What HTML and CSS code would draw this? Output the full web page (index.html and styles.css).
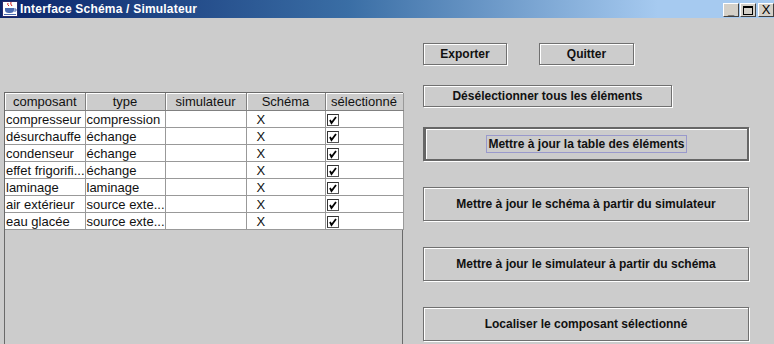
FILE: index.html
```html
<!DOCTYPE html>
<html lang="fr">
<head>
  <meta charset="UTF-8">
  <title>Interface Schéma / Simulateur</title>
  <link rel="stylesheet" href="styles.css">
</head>
<body>
  <div class="titlebar">
    <svg class="app-icon" width="16" height="16" viewBox="0 0 16 16">
      <rect x="0.5" y="0.5" width="15" height="15" fill="#fff" stroke="#2a2a6a"/>
      <path d="M6 2 Q5 4 7 5 M9 1 Q8 3 10 5" stroke="#d02020" fill="none"/>
      <path d="M3 7 H12 V9 Q12 12 8 12 H7 Q3 12 3 9 Z" fill="#4a6ab0"/>
      <path d="M12 8 H14 V10 H12" stroke="#4a6ab0" fill="none"/>
      <rect x="2" y="13" width="12" height="1" fill="#4a6ab0"/>
    </svg>
    <span class="title">Interface Schéma / Simulateur</span>
    <div class="controls">
      <span class="ctl">_</span>
      <span class="ctl"><i class="maxbox"></i></span>
      <span class="ctl close">X</span>
    </div>
  </div>

  <div class="content">
    <div class="left">
      <div class="scrollpane">
        <table class="grid">
          <colgroup>
            <col style="width:80px"><col style="width:80px"><col style="width:81px"><col style="width:79px"><col style="width:78px">
          </colgroup>
          <thead>
            <tr><th>composant</th><th>type</th><th>simulateur</th><th>Schéma</th><th class="last">sélectionné</th></tr>
          </thead>
          <tbody id="rows"></tbody>
        </table>
      </div>
    </div>

    <div class="right">
      <div class="toprow">
        <button class="btn small export">Exporter</button>
        <button class="btn small quit">Quitter</button>
      </div>
      <button class="btn small deselect">Désélectionner tous les éléments</button>
      <button class="btn big focused"><span class="focus">Mettre à jour la table des éléments</span></button>
      <button class="btn big">Mettre à jour le schéma à partir du simulateur</button>
      <button class="btn big">Mettre à jour le simulateur à partir du schéma</button>
      <button class="btn big">Localiser le composant sélectionné</button>
    </div>
  </div>

  <script>
    var data = [
      ['compresseur', 'compression'],
      ['désurchauffe', 'échange'],
      ['condenseur', 'échange'],
      ['effet frigorifi...', 'échange'],
      ['laminage', 'laminage'],
      ['air extérieur', 'source exte...'],
      ['eau glacée', 'source exte...']
    ];
    var check = '<svg class="chk" width="12" height="12" viewBox="0 0 12 12">' +
      '<rect x="0.5" y="0.5" width="11" height="11" fill="#fff" stroke="#555"/>' +
      '<path d="M0.5 11.5 V0.5 H11.5" stroke="#333" fill="none"/>' +
      '<path d="M3 6 L4.5 9 L9 3" stroke="#000" stroke-width="1.8" fill="none"/></svg>';
    var body = document.getElementById('rows');
    data.forEach(function (r) {
      var tr = document.createElement('tr');
      tr.innerHTML = '<td>' + r[0] + '</td><td>' + r[1] + '</td><td></td>' +
        '<td class="x">X</td><td class="last">' + check + '</td>';
      body.appendChild(tr);
    });
  </script>
</body>
</html>
```

FILE: styles.css
```css
html, body {
  margin: 0;
  padding: 0;
  width: 774px;
  height: 344px;
  overflow: hidden;
  background-color: #cccccc;
  font-family: "Liberation Sans", Arial, sans-serif;
}
.titlebar {
  height: 18px;
  display: flex;
  align-items: center;
  background: linear-gradient(to right, #0a246a 0%, #3a6ea5 45%, #a6caf0 85%, #a6caf0 100%);
  color: white;
  padding-left: 2px;
}
.app-icon {
  flex: none;
}
.title {
  font-weight: bold;
  font-size: 12px;
  margin-left: 2px;
  letter-spacing: 0.2px;
}
.controls {
  margin-left: auto;
  display: flex;
  gap: 0;
  margin-top: 1px;
}
.ctl {
  width: 14px;
  height: 12px;
  background: #d4d0c8;
  border: 1px solid;
  border-color: #ffffff #404040 #404040 #ffffff;
  color: black;
  font-size: 11px;
  font-weight: bold;
  line-height: 12px;
  text-align: center;
  margin-left: 1px;
}
.ctl.close {
  margin-left: 2px;
  font-weight: normal;
  font-size: 13px;
}
.maxbox {
  display: inline-block;
  width: 8px;
  height: 6px;
  border: 1px solid black;
  border-top-width: 2px;
  margin-top: 2px;
}
.content {
  display: flex;
  height: 326px;
}
.left {
  padding: 74px 0 0 4px;
  width: 399px;
}
.scrollpane {
  border: 1px solid #6a6a6a;
  border-bottom: none;
  height: 252px;
}
.grid {
  border-collapse: collapse;
  table-layout: fixed;
  width: 398px;
  font-size: 13px;
}
.grid th {
  height: 17px;
  padding: 0;
  font-weight: normal;
  background: #cccccc;
  border: 1px solid #808080;
  border-top: none;
  box-shadow: inset 1px 1px #ffffff;
  text-align: center;
  color: #111;
}
.grid th:first-child {
  border-left: none;
}
.grid td {
  height: 16px;
  padding: 0 0 0 1px;
  background: white;
  border-right: 1px solid #999999;
  border-bottom: 1px solid #999999;
  white-space: nowrap;
  overflow: hidden;
  color: #111;
}
.grid .last {
  border-right: 1px solid #999999;
}
.grid td.x {
  padding-left: 10px;
}
.chk {
  display: block;
  margin-top: 1px;
}
.right {
  display: flex;
  flex-direction: column;
  align-items: flex-start;
  padding: 25px 0 0 20px;
  gap: 20px;
}
.toprow {
  display: flex;
  gap: 32px;
}
.btn {
  font-family: "Liberation Sans", Arial, sans-serif;
  font-weight: bold;
  font-size: 12px;
  color: #111;
  background: #cccccc;
  border: 1px solid #707070;
  box-shadow: inset 1px 1px #ffffff, 1px 1px #ffffff;
  padding: 0;
  margin: 0;
}
.small {
  height: 22px;
}
.export {
  width: 84px;
}
.quit {
  width: 95px;
}
.deselect {
  width: 249px;
}
.big {
  width: 326px;
  height: 34px;
}
.right .big + .big {
  margin-top: 6px;
}
.focused {
  border: 2px solid #666666;
  border-left-width: 3px;
}
.focus {
  border: 1px solid #9999cc;
  padding: 1px 1px;
}
```
